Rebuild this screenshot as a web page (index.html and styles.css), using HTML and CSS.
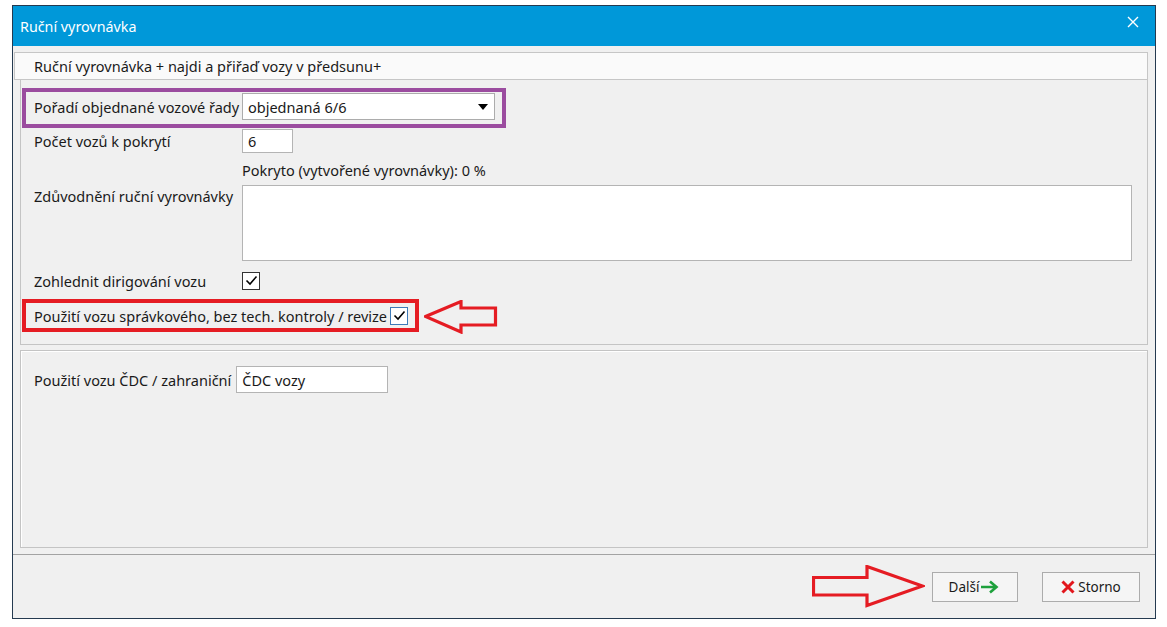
FILE: index.html
```html
<html>
  <head>
    <meta charset="utf-8">
    <link rel="stylesheet" href="styles.css">
  </head>
  <body>
    <div class="window">
      <div class="titlebar">
        <span>Ruční vyrovnávka</span>
        <svg class="close" width="12" height="12" viewBox="0 0 12 12"><path d="M1 1L11 11M11 1L1 11" stroke="#fff" stroke-width="1.4"/></svg>
      </div>

      <div class="content">
        <div class="tab-head">Ruční vyrovnávka + najdi a přiřaď vozy v předsunu+</div>

        <div class="panel panel-main">
          <div class="row row-select">
            <span class="label">Pořadí objednané vozové řady</span>
            <div class="select-field">
              <span>objednaná 6/6</span>
              <svg width="10" height="6" viewBox="0 0 10 6"><path d="M0 0H10L5 6Z" fill="#000"/></svg>
            </div>
          </div>
          <div class="row row-count">
            <span class="label">Počet vozů k pokrytí</span>
            <div class="input-field count-field">6</div>
          </div>
          <div class="row row-info">
            <span class="label"></span>
            <span>Pokryto (vytvořené vyrovnávky): 0 %</span>
          </div>
          <div class="row row-reason">
            <span class="label">Zdůvodnění ruční vyrovnávky</span>
            <div class="textarea-field"></div>
          </div>
          <div class="row row-check">
            <span class="label">Zohlednit dirigování vozu</span>
            <span class="checkbox">
              <svg width="13" height="11" viewBox="0 0 13 11"><path d="M1.5 5.5L5 9L11.5 1.5" stroke="#000" stroke-width="1.6" fill="none"/></svg>
            </span>
          </div>
          <div class="row row-repair">
            <span>Použití vozu správkového, bez tech. kontroly / revize</span>
            <span class="checkbox focused">
              <svg width="13" height="11" viewBox="0 0 13 11"><path d="M1.5 5.5L5 9L11.5 1.5" stroke="#000" stroke-width="1.6" fill="none"/></svg>
            </span>
          </div>
        </div>

        <div class="panel panel-foreign">
          <div class="row row-foreign">
            <span>Použití vozu ČDC / zahraniční</span>
            <div class="input-field foreign-field">ČDC vozy</div>
          </div>
        </div>
      </div>

      <div class="footer">
        <button class="btn btn-next">Další
          <svg width="19" height="14" viewBox="0 0 19 14"><path d="M1 7H16M10 1.5L16.5 7L10 12.5" stroke="#1ea13c" stroke-width="2.6" fill="none"/></svg>
        </button>
        <button class="btn btn-cancel">
          <svg width="14" height="14" viewBox="0 0 14 14"><path d="M1.5 1.5L12.5 12.5M12.5 1.5L1.5 12.5" stroke="#e2161c" stroke-width="3"/></svg>
          Storno
        </button>
      </div>

      <!-- annotations drawn over the dialog -->
      <div class="mark mark-purple"></div>
      <div class="mark mark-red"></div>
      <svg class="arrow arrow-left" width="74" height="34" viewBox="0 0 74 34">
        <path d="M1.5 16.5L37 1.5V8H71.5V25H37V32Z" stroke="#e51c23" stroke-width="3.2" fill="none" stroke-linejoin="miter"/>
      </svg>
      <svg class="arrow arrow-right" width="113" height="43" viewBox="0 0 113 43">
        <path d="M1.5 12.5H55V1.5L110.5 21L55 40.5V30H1.5Z" stroke="#e51c23" stroke-width="3.2" fill="none" stroke-linejoin="miter"/>
      </svg>
    </div>
  </body>
</html>
```

FILE: styles.css
```css
body{
  margin: 0;
  background: #fff;
  font: 14.5px "Noto Sans", "Liberation Sans", sans-serif;
  color: #1a1a1a;
}
.window{
  position: relative;
  margin: 5px 0 0 12px;
  width: 1144px;
  height: 614px;
  box-sizing: border-box;
  border: 1px solid #253a50;
  background: #f0f0f0;
  display: flex;
  flex-direction: column;
}
.titlebar{
  height: 40px;
  background: #0098d9;
  color: #fff;
  display: flex;
  align-items: center;
  justify-content: space-between;
  padding: 0 16px 0 7px;
  font-size: 14.3px;
}
.titlebar .close{
  margin-top: -8px;
}
.content{
  padding: 6px 7px 0 1px;
}
.tab-head{
  height: 26px;
  border: 1px solid #c6c6c6;
  background: #fafafa;
  padding-left: 19px;
  display: flex;
  align-items: center;
}
.panel{
  margin-left: 6px;
  border: 1px solid #c4c4c4;
  box-sizing: border-box;
}
.panel-main{
  border-top: none;
  height: 265px;
  padding: 13px 0 0 13px;
}
.panel-foreign{
  margin-top: 5px;
  height: 198px;
  padding: 15px 0 0 13px;
  box-shadow: inset 1px 1px 0 #fff;
}
.row{
  display: flex;
  align-items: center;
}
.row .label{
  width: 208px;
  flex: none;
}
.row-select{
  height: 27px;
}
.select-field{
  width: 253px;
  height: 27px;
  box-sizing: border-box;
  border: 1px solid #acacac;
  background: #fff;
  display: flex;
  align-items: center;
  justify-content: space-between;
  padding: 0 6px 0 5px;
}
.input-field{
  box-sizing: border-box;
  border: 1px solid #b4b4b4;
  background: #fff;
  display: flex;
  align-items: center;
  padding-left: 5px;
}
.row-count{
  margin-top: 9px;
}
.count-field{
  width: 51px;
  height: 24px;
}
.row-info{
  height: 20px;
  margin-top: 7px;
}
.row-reason{
  margin-top: 5px;
  align-items: flex-start;
}
.row-reason .label{
  padding-top: 1px;
}
.textarea-field{
  width: 890px;
  height: 76px;
  box-sizing: border-box;
  border: 1px solid #b4b4b4;
  background: #fff;
}
.row-check{
  margin-top: 10px;
  height: 19px;
}
.checkbox{
  width: 18px;
  height: 18px;
  box-sizing: border-box;
  border: 1px solid #333;
  background: #fff;
  display: flex;
  align-items: center;
  justify-content: center;
}
.checkbox.focused{
  border-color: #3d7ab8;
}
.row-repair{
  margin-top: 16px;
  height: 19px;
  gap: 3px;
}
.row-foreign{
  gap: 5px;
}
.foreign-field{
  width: 152px;
  height: 27px;
}
.footer{
  margin-top: auto;
  height: 64px;
  border-top: 1px solid #a3a3a3;
  display: flex;
  justify-content: flex-end;
  align-items: flex-start;
  gap: 24px;
  padding: 17px 15px 0 0;
  box-sizing: border-box;
}
.btn{
  height: 30px;
  box-sizing: border-box;
  border: 1px solid #acacac;
  background: #f5f5f5;
  font: 13.5px "Noto Sans", "Liberation Sans", sans-serif;
  color: #1a1a1a;
  display: flex;
  align-items: center;
  justify-content: center;
  gap: 1px;
  padding: 0;
}
.btn-next{
  width: 86px;
  padding-right: 2px;
}
.btn-cancel{
  width: 98px;
  gap: 3px;
}
.mark{
  position: absolute;
  box-sizing: border-box;
}
.mark-purple{
  left: 9px;
  top: 82px;
  width: 484px;
  height: 40px;
  border: 4px solid #9b4c9f;
}
.mark-red{
  left: 9px;
  top: 293px;
  width: 397px;
  height: 33px;
  border: 4px solid #e51c23;
}
.arrow{
  position: absolute;
}
.arrow-left{
  left: 411px;
  top: 294px;
}
.arrow-right{
  left: 799px;
  top: 559px;
}
```
